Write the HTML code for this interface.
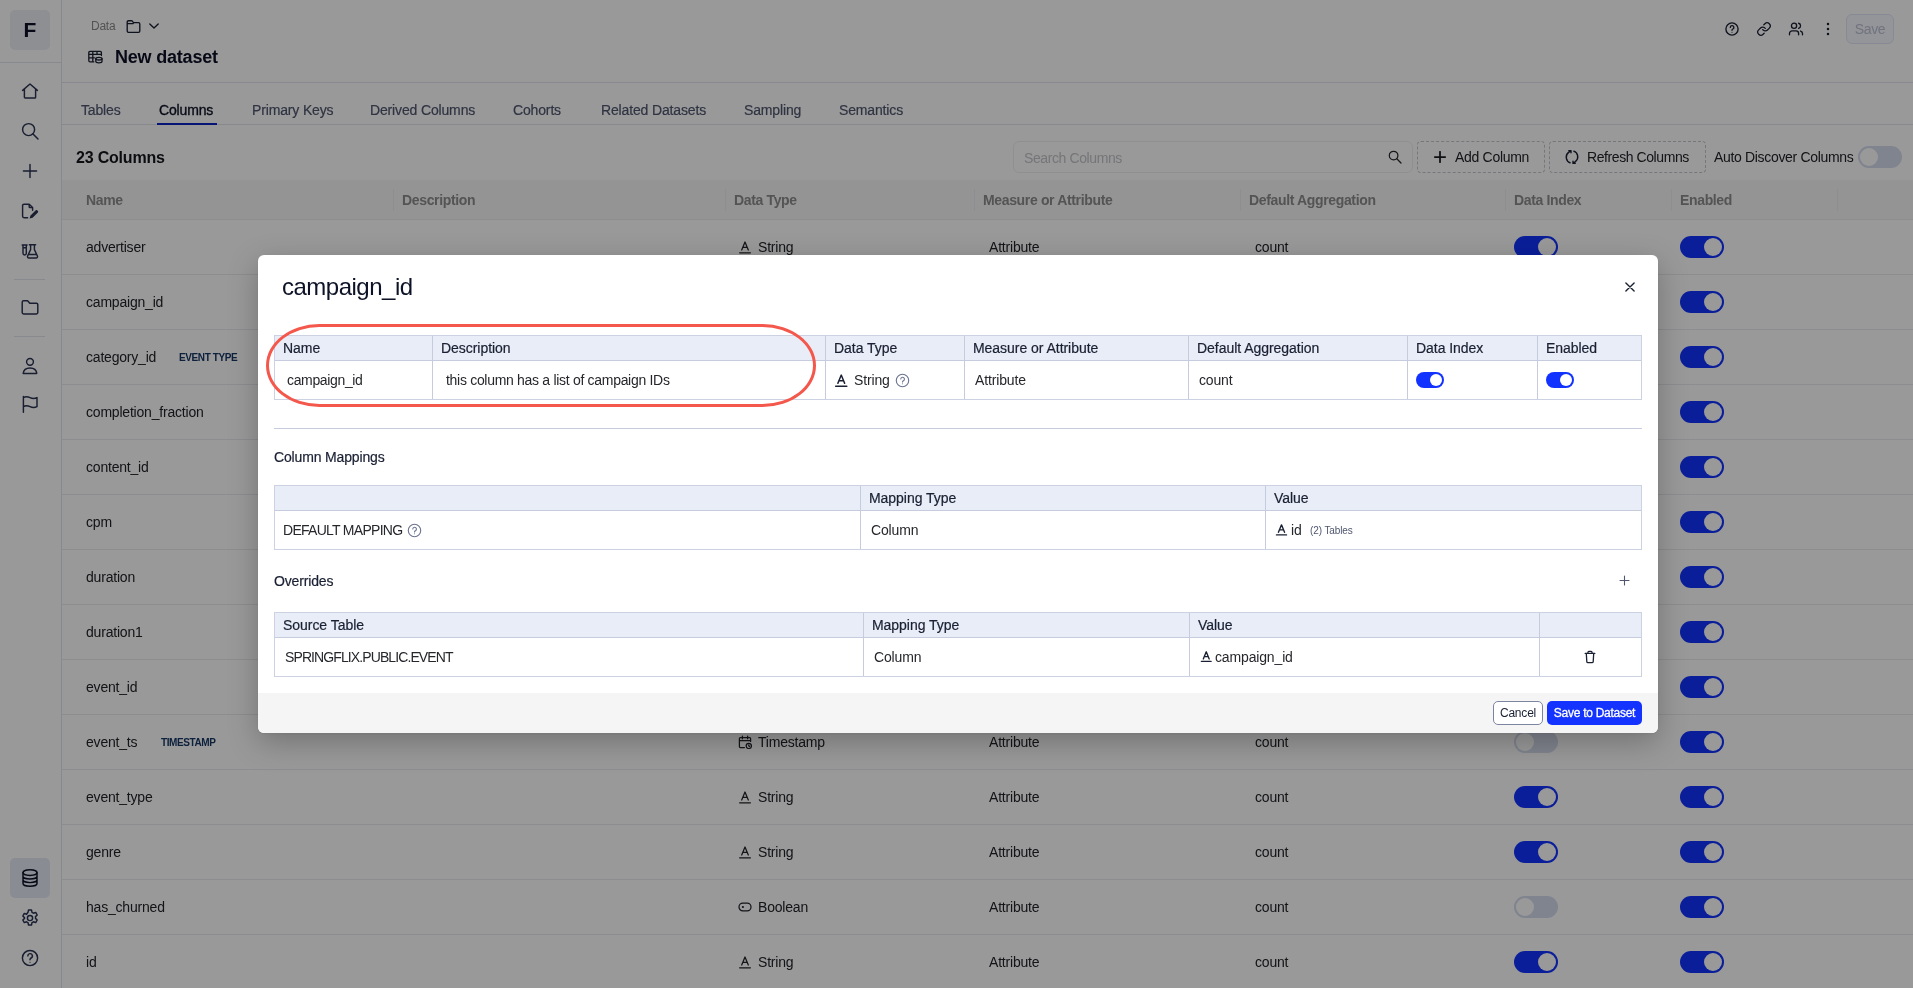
<!DOCTYPE html>
<html lang="en">
<head>
<meta charset="utf-8">
<title>New dataset</title>
<style>
*{box-sizing:border-box;margin:0;padding:0}
html,body{width:1913px;height:988px;overflow:hidden;background:#fff}
body{font-family:"Liberation Sans",sans-serif;color:#1a2033;font-size:14px;position:relative}
.abs{position:absolute}
body>*{will-change:transform}
svg{display:block}
/* ---------- sidebar ---------- */
#side{position:absolute;left:0;top:0;width:62px;height:988px;border-right:1px solid #e1e4ee;background:#fff}
#logo{position:absolute;left:10px;top:10px;width:40px;height:40px;border-radius:5px;background:#eceef6;font-weight:700;font-size:21px;line-height:40px;text-align:center;color:#0d1226}
.sdiv{position:absolute;left:0;top:62px;width:61px;height:1px;background:#e1e4ee}
.sdiv2{position:absolute;left:14px;width:31px;height:1px;background:#e1e4ee}
.sic{position:absolute;left:20px;width:20px;height:20px;color:#2a3352}
.sic svg{width:20px;height:20px;fill:none;stroke:currentColor;stroke-width:1.45;stroke-linecap:round;stroke-linejoin:round}
#dbact{position:absolute;left:10px;top:858px;width:40px;height:40px;border-radius:5px;background:#e6e9f5}
/* ---------- header ---------- */
#hdr{position:absolute;left:62px;top:0;right:0;height:83px;border-bottom:1px solid #e1e4ee}
#crumb{position:absolute;left:91px;top:18px;font-size:12px;line-height:16px;color:#8a8a8a;letter-spacing:-0.25px}
#title{position:absolute;left:115px;top:45px;font-size:18px;line-height:24px;font-weight:700;color:#0d1226;letter-spacing:-0.2px;white-space:nowrap}
.hic{position:absolute;top:21px;width:16px;height:16px;color:#1a2033}
.hic svg{width:16px;height:16px;fill:none;stroke:currentColor;stroke-width:1.35;stroke-linecap:round;stroke-linejoin:round}
#savebtn{position:absolute;left:1846px;top:14px;width:48px;height:30px;border:1px solid #e1e6f7;border-radius:6px;background:#f7f8fd;color:#bcc2d6;font-size:14px;line-height:28px;text-align:center;letter-spacing:-0.3px}
/* ---------- tabs ---------- */
#tabs{position:absolute;left:62px;top:83px;right:0;height:42px;border-bottom:1px solid #e1e4ee}
.tab{position:absolute;top:102px;font-size:14px;line-height:16px;color:#4f566e;white-space:nowrap;letter-spacing:-0.15px;-webkit-text-stroke:0.2px #4f566e}
.tab.on{color:#0d1226;-webkit-text-stroke:0.35px #0d1226}
#tabline{position:absolute;left:157px;top:123px;width:60px;height:2px;background:#0a22c4}
/* ---------- toolbar ---------- */
#count{position:absolute;left:76px;top:148px;font-size:16px;line-height:20px;font-weight:700;color:#15161c;letter-spacing:-0.2px}
#search{position:absolute;left:1013px;top:141px;width:400px;height:32px;border:1px solid #eeeff4;border-radius:6px;background:#fff}
#search span{position:absolute;left:10px;top:8px;font-size:14px;line-height:16px;color:#c4c5ca;letter-spacing:-0.4px}
.dbtn{position:absolute;top:141px;height:32px;border:1px dashed #c6c7ce;border-radius:4px;font-size:14px;line-height:30px;color:#222329;white-space:nowrap;letter-spacing:-0.1px}
#auto{position:absolute;left:1714px;top:149px;font-size:14px;line-height:16px;color:#222329;white-space:nowrap;letter-spacing:-0.33px}
/* ---------- grid ---------- */
#ghead{position:absolute;left:62px;top:180px;right:0;height:40px;background:#f7f7f8;border-bottom:1px solid #ececf0}
.gh{position:absolute;top:192px;font-size:14px;line-height:16px;font-weight:700;color:#8c8c8c;white-space:nowrap;letter-spacing:-0.35px}
.gsep{position:absolute;top:189px;width:1px;height:22px;background:#ededf0}
.row{position:absolute;left:62px;right:0;height:55px;border-bottom:1px solid #ececf0}
.row div{position:absolute;top:19px;font-size:14px;line-height:16px;color:#222329;white-space:nowrap;letter-spacing:-0.2px}
.row .nm{left:24px}
.row .tg{top:21px;font-size:10px;line-height:14px;font-weight:700;color:#163766;letter-spacing:-0.4px}
.row .ty{left:696px}
.row .at{left:927px}
.row .ag{left:1193px}
.row .ic{left:676px;top:20px;width:14px;height:14px}
.row .ic svg{width:14px;height:14px;fill:none;stroke:#222329;stroke-width:1.25;stroke-linecap:round;stroke-linejoin:round}
.sw{position:absolute;width:44px;height:22px;border-radius:11px;background:#1232ff}
.sw i{position:absolute;right:2px;top:2px;width:18px;height:18px;border-radius:9px;background:#fff}
.sw.off{background:#d5dced}
.sw.off i{right:auto;left:2px}
.row .sw{top:16px}
.row .s1{left:1452px}
.row .s2{left:1618px}
/* ---------- overlay + modal ---------- */
#ovl{position:absolute;left:0;top:0;width:1913px;height:988px;background:rgba(0,0,0,0.4)}
#modal{position:absolute;left:258px;top:255px;width:1400px;height:478px;background:#fff;border-radius:6px;box-shadow:0 9px 30px rgba(0,0,0,0.25),0 1px 3px rgba(0,0,0,0.06);overflow:hidden}
#mfoot{position:absolute;left:0;top:438px;width:1400px;height:40px;background:#f5f5f5}
#mtitle{position:absolute;left:24px;top:16px;font-size:24px;line-height:32px;color:#0d1226;letter-spacing:-0.5px}

/* modal tables */
.tbl{position:absolute;left:16px;width:1368px;height:65px;border:1px solid #ccd2e1;background:#fff}
.tbl .hd{position:absolute;left:0;top:0;right:0;height:25px;background:#e9edf7;border-bottom:1px solid #c6ccdd}
.tbl .v{position:absolute;top:0;bottom:0;width:1px;background:#c6ccdd}
.tbl .h{position:absolute;top:4px;font-size:14px;line-height:16px;color:#1a2033;white-space:nowrap;letter-spacing:-0.04px;-webkit-text-stroke:0.2px #1a2033}
.tbl .c{position:absolute;top:36px;font-size:14px;line-height:16px;color:#26272c;white-space:nowrap;letter-spacing:-0.15px}
.tbl .sm{position:absolute;top:39px;font-size:10px;line-height:12px;color:#4f566e;white-space:nowrap;letter-spacing:-0.1px}
.tbl svg{position:absolute;fill:none;stroke:#1a2033;stroke-linecap:round;stroke-linejoin:round}
.tbl .sw{width:28px;height:16px;border-radius:8px;top:36px}
.tbl .sw i{width:12px;height:12px;border-radius:6px;top:2px;right:2px}
.msec{position:absolute;left:16px;font-size:14px;line-height:16px;color:#1a2033;letter-spacing:-0.15px;-webkit-text-stroke:0.2px #1a2033}
#mhr{position:absolute;left:16px;top:173px;width:1368px;height:1px;background:#c6ccdd}
#anno{position:absolute;left:8px;top:69px;width:550px;height:83px;border:3px solid #f4574b;border-radius:54px/42px}
#cancel{position:absolute;left:1235px;top:446px;width:50px;height:24px;border:1px solid #7d84a0;border-radius:5px;background:#fff;font-size:12px;line-height:22px;text-align:center;color:#1a2033;letter-spacing:-0.2px}
#saveds{position:absolute;left:1289px;top:446px;width:95px;height:24px;border-radius:5px;background:#1533ff;font-size:12px;line-height:24px;text-align:center;color:#fff;letter-spacing:-0.27px;-webkit-text-stroke:0.3px #fff}
</style>
</head>
<body>
<!-- SIDEBAR -->
<div id="side">
  <div id="logo">F</div>
  <div class="sdiv"></div>
  <div class="sdiv2" style="top:279px"></div>
  <div class="sdiv2" style="top:336px"></div>
  <div id="dbact"></div>
  <div class="sic" style="top:81px"><svg viewBox="0 0 20 20"><path d="M2.6 9.4 10 3l7.4 6.4M4.4 8v8.2a.8.8 0 0 0 .8.8h9.6a.8.8 0 0 0 .8-.8V8"/></svg></div>
  <div class="sic" style="top:121px"><svg viewBox="0 0 20 20"><circle cx="8.6" cy="8.6" r="6"/><path d="M13 13l5 5"/></svg></div>
  <div class="sic" style="top:161px"><svg viewBox="0 0 20 20"><path d="M10 3.4v13.2M3.4 10h13.2"/></svg></div>
  <div class="sic" style="top:201px"><svg viewBox="0 0 20 20"><path d="M9.200 3.200H4a1.400 1.400 0 0 0-1.400 1.400v10.700a1.400 1.400 0 0 0 1.400 1.400h3.600M9.200 3.200l3.400 3.400v2.600M9.200 3.200v2.600a.8.800 0 0 0 .8.800h2.600"/><path d="M9.600 17.600l.900-3 5.300-5.300a.9.900 0 0 1 1.300 0l.800.800a.9.900 0 0 1 0 1.300l-5.300 5.300z" fill="currentColor" stroke="none"/></svg></div>
  <div class="sic" style="top:241px"><svg viewBox="0 0 20 20"><path d="M3 4v8.300a1.650 1.650 0 0 0 3.300 0V4M2.200 4h4.900M3 6.800h3.300M9.4 3.8h6.2M10.6 3.8v4.8L7.6 15a1.4 1.4 0 0 0 1.3 2h7.2a1.4 1.4 0 0 0 1.3-2l-3-6.4V3.800M9 13.400h7"/></svg></div>
  <div class="sic" style="top:298px"><svg viewBox="0 0 20 20"><path d="M2.2 4.200a1.4 1.400 0 0 1 1.4-1.400h4l2.200 2.400h6.600a1.400 1.400 0 0 1 1.400 1.400v8a1.400 1.400 0 0 1-1.400 1.400h-12.800a1.400 1.400 0 0 1-1.400-1.400z"/></svg></div>
  <div class="sic" style="top:356px"><svg viewBox="0 0 20 20"><circle cx="10" cy="5.800" r="3.400"/><path d="M3.200 17.400c.400-3.600 3.200-5.400 6.800-5.400s6.400 1.800 6.800 5.400z"/></svg></div>
  <div class="sic" style="top:394px"><svg viewBox="0 0 20 20"><path d="M3.400 18.200V2.400M3.400 3.600c2.400-1.200 4.400-1 6.600 0s4.400 1.200 7 0v9c-2.600 1.200-4.800 1-7 0s-4.200-1.200-6.600 0"/></svg></div>
  <div class="sic" style="top:868px;color:#0d1226"><svg viewBox="0 0 20 20"><ellipse cx="10" cy="4.600" rx="7" ry="2.800"/><path d="M3 4.600v10.800c0 1.500 3.100 2.800 7 2.800s7-1.300 7-2.800V4.600M3 8.200c0 1.500 3.100 2.800 7 2.800s7-1.300 7-2.800M3 11.800c0 1.500 3.100 2.800 7 2.800s7-1.300 7-2.800"/></svg></div>
  <div class="sic" style="top:908px"><svg viewBox="0 0 20 20"><circle cx="10" cy="10" r="2.600"/><path d="M8.500 2h3l.5 2.300 1.500.9 2.200-.8 1.500 2.600-1.700 1.600v1.800l1.700 1.600-1.500 2.600-2.200-.8-1.500.9-.5 2.300h-3l-.5-2.300-1.500-.9-2.200.8-1.500-2.600 1.700-1.600V9.600L2.800 8l1.500-2.600 2.200.8L8 4.300z"/></svg></div>
  <div class="sic" style="top:948px"><svg viewBox="0 0 20 20"><circle cx="10" cy="10" r="7.600"/><path d="M7.800 7.900a2.300 2.300 0 1 1 3.300 2.100c-.7.400-1.100.9-1.100 1.700"/><circle cx="10" cy="14.300" r=".6" fill="currentColor" stroke="none"/></svg></div>
</div>
<!-- HEADER -->
<div id="hdr"></div>
<div id="crumb">Data</div>
<div id="title">New dataset</div>

<div class="hic" style="left:126px;top:19px;width:15px;height:15px"><svg style="width:15px;height:15px" viewBox="0 0 15 15"><path d="M1.200 4.200V3a1.300 1.300 0 0 1 1.300-1.300h2.900a1.300 1.300 0 0 1 1.100.600l.500.700a1.300 1.300 0 0 0 1.100.600h4.400a1.300 1.300 0 0 1 1.300 1.300v7.100a1.300 1.300 0 0 1-1.300 1.300h-10a1.300 1.300 0 0 1-1.300-1.300V4.600M1.200 4.600h6"/></svg></div>
<div class="hic" style="left:148px;top:20px;width:12px;height:12px"><svg style="width:12px;height:12px" viewBox="0 0 12 12"><path d="M1.800 4l4.200 4 4.200-4"/></svg></div>
<div class="hic" style="left:88px;top:50px;width:15px;height:14px"><svg style="width:15px;height:14px;stroke-width:1.3" viewBox="0 0 15 14"><path d="M13.400 5.600V2.600a1.200 1.200 0 0 0-1.200-1.200H2a1.200 1.200 0 0 0-1.200 1.200v8a1.200 1.200 0 0 0 1.200 1.200h3.800M.8 4.400h12.600M.8 7.800h5.600M4.800 1.400v10.400M9 1.400v3"/><ellipse cx="10.900" cy="8.700" rx="3.100" ry="1.300"/><path d="M7.800 8.700v2.800c0 .700 1.400 1.300 3.100 1.300s3.100-.600 3.100-1.300V8.700"/></svg></div>
<div class="hic" style="left:1724px"><svg viewBox="0 0 16 16"><circle cx="8" cy="8" r="6.100"/><path d="M6.300 6.400a1.800 1.800 0 1 1 2.600 1.600c-.600.300-.900.700-.900 1.300"/><circle cx="8" cy="11.300" r=".55" fill="currentColor" stroke="none"/></svg></div>
<div class="hic" style="left:1756px"><svg viewBox="-0.8 -0.8 25.6 25.6" style="stroke-width:2.050"><path d="M10 13a5 5 0 0 0 7.540.540l3-3a5 5 0 0 0-7.070-7.070l-1.720 1.710"/><path d="M14 11a5 5 0 0 0-7.540-.540l-3 3a5 5 0 0 0 7.070 7.070l1.710-1.710"/></svg></div>
<div class="hic" style="left:1788px"><svg viewBox="-0.3 -0.3 24.6 24.6" style="stroke-width:2.050"><path d="M16 21v-2a4 4 0 0 0-4-4H6a4 4 0 0 0-4 4v2"/><circle cx="9" cy="7" r="4"/><path d="M22 21v-2a4 4 0 0 0-3-3.870"/><path d="M16 3.130a4 4 0 0 1 0 7.750"/></svg></div>
<div class="hic" style="left:1820px"><svg viewBox="0 0 16 16"><circle cx="8" cy="2.900" r="1.250" fill="currentColor" stroke="none"/><circle cx="8" cy="8" r="1.250" fill="currentColor" stroke="none"/><circle cx="8" cy="13.100" r="1.250" fill="currentColor" stroke="none"/></svg></div>
<div id="savebtn">Save</div>
<!-- TABS -->
<div id="tabs"></div>
<div class="tab" style="left:81px">Tables</div>
<div class="tab on" style="left:159px">Columns</div>
<div class="tab" style="left:252px">Primary Keys</div>
<div class="tab" style="left:370px">Derived Columns</div>
<div class="tab" style="left:513px">Cohorts</div>
<div class="tab" style="left:601px">Related Datasets</div>
<div class="tab" style="left:744px">Sampling</div>
<div class="tab" style="left:839px">Semantics</div>
<div id="tabline"></div>
<!-- TOOLBAR -->
<div id="count">23 Columns</div>
<div id="search"><span>Search Columns</span></div>
<div class="dbtn" style="left:1417px;width:128px;padding-left:37px;letter-spacing:-0.3px">Add Column</div>
<div class="dbtn" style="left:1549px;width:157px;padding-left:37px;letter-spacing:-0.42px">Refresh Columns</div>

<svg class="abs" style="left:1388px;top:150px;width:14px;height:14px;fill:none;stroke:#26272c;stroke-width:1.250;stroke-linecap:round" viewBox="0 0 14 14"><circle cx="5.600" cy="5.600" r="4.300"/><path d="M8.800 8.800l4.200 4.200"/></svg>
<svg class="abs" style="left:1434px;top:151px;width:12px;height:12px;fill:none;stroke:#1a1b20;stroke-width:1.750;stroke-linecap:round" viewBox="0 0 12 12"><path d="M6 .8v10.400M.8 6h10.400"/></svg>
<svg class="abs" style="left:1564px;top:149px;width:16px;height:16px;fill:none;stroke:#1a2033;stroke-width:1.400;stroke-linecap:round;stroke-linejoin:round" viewBox="0 0 16 16"><path d="M6.200 13.800A6 6 0 0 1 4.600 3.400L6.800 1.800M4.800 1.600h2.200v2.200"/><path d="M9.800 2.200a6 6 0 0 1 1.600 10.400l-2.200 1.600M11.200 14.400H9v-2.200"/></svg>
<div id="auto">Auto Discover Columns</div>
<div class="sw off" style="left:1858px;top:146px"><i></i></div>
<!-- GRID -->
<div id="ghead"></div>
<div id="rows">
<div class="gh" style="left:86px">Name</div>
<div class="gh" style="left:402px">Description</div>
<div class="gh" style="left:734px">Data Type</div>
<div class="gh" style="left:983px">Measure or Attribute</div>
<div class="gh" style="left:1249px">Default Aggregation</div>
<div class="gh" style="left:1514px">Data Index</div>
<div class="gh" style="left:1680px">Enabled</div>
<div class="gsep" style="left:393px"></div>
<div class="gsep" style="left:725px"></div>
<div class="gsep" style="left:974px"></div>
<div class="gsep" style="left:1240px"></div>
<div class="gsep" style="left:1505px"></div>
<div class="gsep" style="left:1671px"></div>
<div class="gsep" style="left:1837px"></div>
<div class="row" style="top:220px"><div class="nm">advertiser</div><div class="ic"><svg viewBox="0 0 14 14"><path d="M3.700 10 7 2 10.300 10M4.800 7.400h4.400M1.600 12.800h10.800"/></svg></div><div class="ty">String</div><div class="at">Attribute</div><div class="ag">count</div><div class="sw s1"><i></i></div><div class="sw s2"><i></i></div></div>
<div class="row" style="top:275px"><div class="nm">campaign_id</div><div class="ic"><svg viewBox="0 0 14 14"><path d="M3.700 10 7 2 10.300 10M4.800 7.400h4.400M1.600 12.800h10.800"/></svg></div><div class="ty">String</div><div class="at">Attribute</div><div class="ag">count</div><div class="sw s1"><i></i></div><div class="sw s2"><i></i></div></div>
<div class="row" style="top:330px"><div class="nm">category_id</div><div class="tg" style="left:117px">EVENT TYPE</div><div class="ic"><svg viewBox="0 0 14 14"><path d="M3.700 10 7 2 10.300 10M4.800 7.400h4.400M1.600 12.800h10.800"/></svg></div><div class="ty">String</div><div class="at">Attribute</div><div class="ag">count</div><div class="sw s1"><i></i></div><div class="sw s2"><i></i></div></div>
<div class="row" style="top:385px"><div class="nm">completion_fraction</div><div class="ic"><svg viewBox="0 0 14 14"><path d="M3.700 10 7 2 10.300 10M4.800 7.400h4.400M1.600 12.800h10.800"/></svg></div><div class="ty">String</div><div class="at">Attribute</div><div class="ag">count</div><div class="sw s1"><i></i></div><div class="sw s2"><i></i></div></div>
<div class="row" style="top:440px"><div class="nm">content_id</div><div class="ic"><svg viewBox="0 0 14 14"><path d="M3.700 10 7 2 10.300 10M4.800 7.400h4.400M1.600 12.800h10.800"/></svg></div><div class="ty">String</div><div class="at">Attribute</div><div class="ag">count</div><div class="sw s1"><i></i></div><div class="sw s2"><i></i></div></div>
<div class="row" style="top:495px"><div class="nm">cpm</div><div class="ic"><svg viewBox="0 0 14 14"><path d="M3.700 10 7 2 10.300 10M4.800 7.400h4.400M1.600 12.800h10.800"/></svg></div><div class="ty">String</div><div class="at">Attribute</div><div class="ag">count</div><div class="sw s1"><i></i></div><div class="sw s2"><i></i></div></div>
<div class="row" style="top:550px"><div class="nm">duration</div><div class="ic"><svg viewBox="0 0 14 14"><path d="M3.700 10 7 2 10.300 10M4.800 7.400h4.400M1.600 12.800h10.800"/></svg></div><div class="ty">String</div><div class="at">Attribute</div><div class="ag">count</div><div class="sw s1"><i></i></div><div class="sw s2"><i></i></div></div>
<div class="row" style="top:605px"><div class="nm">duration1</div><div class="ic"><svg viewBox="0 0 14 14"><path d="M3.700 10 7 2 10.300 10M4.800 7.400h4.400M1.600 12.800h10.800"/></svg></div><div class="ty">String</div><div class="at">Attribute</div><div class="ag">count</div><div class="sw s1"><i></i></div><div class="sw s2"><i></i></div></div>
<div class="row" style="top:660px"><div class="nm">event_id</div><div class="ic"><svg viewBox="0 0 14 14"><path d="M3.700 10 7 2 10.300 10M4.800 7.400h4.400M1.600 12.800h10.800"/></svg></div><div class="ty">String</div><div class="at">Attribute</div><div class="ag">count</div><div class="sw s1"><i></i></div><div class="sw s2"><i></i></div></div>
<div class="row" style="top:715px"><div class="nm">event_ts</div><div class="tg" style="left:99px">TIMESTAMP</div><div class="ic"><svg viewBox="0 0 14 14"><path d="M12.600 6.400V3.600a1 1 0 0 0-1-1H2.400a1 1 0 0 0-1 1v8a1 1 0 0 0 1 1h4M1.400 5.600h11.200M4.400 1.200v2.600M9.600 1.200v2.600"/><circle cx="10.800" cy="10.900" r="2.600"/><path d="M10.800 9.800v1.200l.700.400"/></svg></div><div class="ty">Timestamp</div><div class="at">Attribute</div><div class="ag">count</div><div class="sw s1 off"><i></i></div><div class="sw s2"><i></i></div></div>
<div class="row" style="top:770px"><div class="nm">event_type</div><div class="ic"><svg viewBox="0 0 14 14"><path d="M3.700 10 7 2 10.300 10M4.800 7.400h4.400M1.600 12.800h10.800"/></svg></div><div class="ty">String</div><div class="at">Attribute</div><div class="ag">count</div><div class="sw s1"><i></i></div><div class="sw s2"><i></i></div></div>
<div class="row" style="top:825px"><div class="nm">genre</div><div class="ic"><svg viewBox="0 0 14 14"><path d="M3.700 10 7 2 10.300 10M4.800 7.400h4.400M1.600 12.800h10.800"/></svg></div><div class="ty">String</div><div class="at">Attribute</div><div class="ag">count</div><div class="sw s1"><i></i></div><div class="sw s2"><i></i></div></div>
<div class="row" style="top:880px"><div class="nm">has_churned</div><div class="ic"><svg viewBox="0 0 14 14"><rect x="1" y="3.2" width="12" height="7.6" rx="3.8"/><circle cx="4.9" cy="7" r="1.1" fill="#1a2033" stroke="none"/></svg></div><div class="ty">Boolean</div><div class="at">Attribute</div><div class="ag">count</div><div class="sw s1 off"><i></i></div><div class="sw s2"><i></i></div></div>
<div class="row" style="top:935px"><div class="nm">id</div><div class="ic"><svg viewBox="0 0 14 14"><path d="M3.700 10 7 2 10.300 10M4.800 7.400h4.400M1.600 12.800h10.800"/></svg></div><div class="ty">String</div><div class="at">Attribute</div><div class="ag">count</div><div class="sw s1"><i></i></div><div class="sw s2"><i></i></div></div>
</div><!--/rows-->
<!-- OVERLAY + MODAL -->
<div id="ovl"></div>
<div id="modal">
  <div id="mtitle">campaign_id</div>
  <svg class="abs" style="left:1367px;top:27px;width:10px;height:10px;fill:none;stroke:#1a2033;stroke-width:1.350;stroke-linecap:round" viewBox="0 0 10 10"><path d="M.9.900l8.200 8.200M9.100.900l-8.200 8.200"/></svg>
  <div class="tbl" style="top:80px">
    <div class="hd"></div>
    <div class="v" style="left:157px"></div><div class="v" style="left:550px"></div><div class="v" style="left:689px"></div><div class="v" style="left:913px"></div><div class="v" style="left:1132px"></div><div class="v" style="left:1262px"></div>
    <div class="h" style="left:8px">Name</div><div class="h" style="left:166px">Description</div><div class="h" style="left:559px">Data Type</div><div class="h" style="left:698px">Measure or Attribute</div><div class="h" style="left:922px">Default Aggregation</div><div class="h" style="left:1141px">Data Index</div><div class="h" style="left:1271px">Enabled</div>
    <div class="c" style="left:12px;letter-spacing:-0.35px">campaign_id</div><div class="c" style="left:171px;letter-spacing:-0.3px">this column has a list of campaign IDs</div>
    <svg style="left:558.7px;top:36.7px;width:14.5px;height:14.5px;stroke-width:1.4" viewBox="0 0 14 14"><path d="M3.700 10 7 2 10.300 10M4.800 7.400h4.400M1.600 12.800h10.800"/></svg><div class="c" style="left:579px">String</div><svg style="left:620px;top:37px;width:15px;height:15px;stroke:#6b7390;stroke-width:1.05" viewBox="0 0 14 14"><circle cx="7" cy="7" r="5.8"/><path d="M5.4 5.6a1.7 1.7 0 1 1 2.4 1.6c-.5.3-.8.6-.8 1.2"/><circle cx="7" cy="10.1" r=".5" fill="#6b7390" stroke="none"/></svg>
    <div class="c" style="left:700px">Attribute</div><div class="c" style="left:924px">count</div>
    <div class="sw" style="left:1141px"><i></i></div><div class="sw" style="left:1271px"><i></i></div>
  </div>
  <div id="anno"></div>
  <div id="mhr"></div>
  <div class="msec" style="top:194px">Column Mappings</div>
  <div class="tbl" style="top:230px">
    <div class="hd"></div>
    <div class="v" style="left:585px"></div><div class="v" style="left:990px"></div>
    <div class="h" style="left:594px">Mapping Type</div><div class="h" style="left:999px">Value</div>
    <div class="c" style="left:8px;letter-spacing:-0.72px">DEFAULT MAPPING</div><svg style="left:132px;top:37px;width:15px;height:15px;stroke:#6b7390;stroke-width:1.05" viewBox="0 0 14 14"><circle cx="7" cy="7" r="5.8"/><path d="M5.4 5.6a1.7 1.7 0 1 1 2.4 1.6c-.5.3-.8.6-.8 1.2"/><circle cx="7" cy="10.1" r=".5" fill="#6b7390" stroke="none"/></svg>
    <div class="c" style="left:596px">Column</div>
    <svg style="left:1000px;top:36.5px;width:13px;height:13px;stroke-width:1.5" viewBox="0 0 14 14"><path d="M3.700 10 7 2 10.300 10M4.800 7.400h4.400M1.600 12.800h10.800"/></svg><div class="c" style="left:1016px">id</div><div class="sm" style="left:1035px">(2) Tables</div>
  </div>
  <div class="msec" style="top:318px">Overrides</div>
  <svg class="abs" style="left:1361px;top:320px;width:11px;height:11px;fill:none;stroke:#4f566e;stroke-width:1.1;stroke-linecap:round" viewBox="0 0 11 11"><path d="M5.5 1v9M1 5.5h9"/></svg>
  <div class="tbl" style="top:357px">
    <div class="hd"></div>
    <div class="v" style="left:588px"></div><div class="v" style="left:914px"></div><div class="v" style="left:1264px"></div>
    <div class="h" style="left:8px">Source Table</div><div class="h" style="left:597px">Mapping Type</div><div class="h" style="left:923px">Value</div>
    <div class="c" style="left:10px;letter-spacing:-0.9px">SPRINGFLIX.PUBLIC.EVENT</div><div class="c" style="left:599px">Column</div>
    <svg style="left:925.3px;top:37px;width:12.5px;height:12.5px;stroke-width:1.55" viewBox="0 0 14 14"><path d="M3.700 10 7 2 10.300 10M4.800 7.400h4.400M1.600 12.800h10.800"/></svg><div class="c" style="left:940px">campaign_id</div>
    <svg style="left:1308px;top:37px;width:14px;height:14px;stroke-width:1.3" viewBox="0 0 14 14"><path d="M2.2 3.4h9.6M5 3.4V2.2a.8.8 0 0 1 .8-.8h2.4a.8.8 0 0 1 .8.8v1.2M3.3 3.4l.5 8.2a1.2 1.2 0 0 0 1.2 1.1h4a1.2 1.2 0 0 0 1.2-1.1l.5-8.2"/></svg>
  </div>
  <div id="mfoot"></div>
  <div id="cancel">Cancel</div>
  <div id="saveds">Save to Dataset</div>
</div>
</body>
</html>
